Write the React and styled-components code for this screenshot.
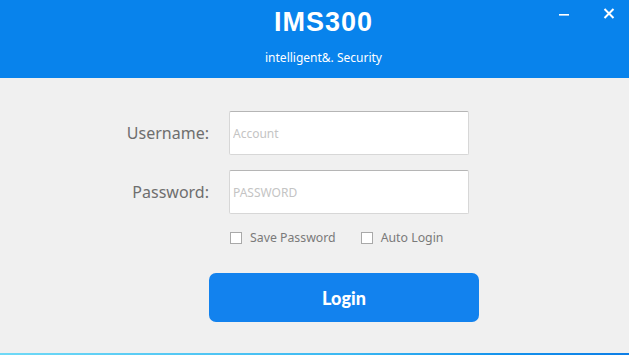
import React, { useState } from "react";
import styled, { createGlobalStyle } from "styled-components";

const GlobalStyle = createGlobalStyle`
  html, body {
    margin: 0;
    padding: 0;
    background: #f0f0f0;
  }
  body {
    font-family: "Noto Sans", "Open Sans", sans-serif;
  }
`;

const Window = styled.div`
  width: 629px;
  height: 355px;
  display: flex;
  flex-direction: column;
  background: #f0f0f0;
  overflow: hidden;
`;

const Header = styled.div`
  position: relative;
  box-sizing: border-box;
  height: 78px;
  padding-left: 18px;
  background-color: #0883ec;
  color: white;
  display: flex;
  flex-direction: column;
  align-items: center;
`;

const Title = styled.h1`
  margin: 6px 0 0;
  font-family: "Liberation Sans", Arial, sans-serif;
  font-size: 27px;
  font-weight: bold;
  letter-spacing: 1px;
  line-height: 32px;
`;

const Subtitle = styled.div`
  margin-top: 12px;
  font-size: 12px;
  line-height: 16px;
`;

const Controls = styled.div`
  position: absolute;
  top: 4px;
  right: 10px;
  display: flex;
  gap: 25px;
`;

const ControlButton = styled.button`
  width: 20px;
  height: 18px;
  padding: 0;
  border: none;
  background: none;
  display: flex;
  align-items: center;
  justify-content: center;
  cursor: pointer;
`;

const Body = styled.div`
  flex: 1;
  display: flex;
  flex-direction: column;
  align-items: flex-start;
  padding-top: 33px;
  padding-left: 109px;
`;

const Row = styled.div`
  display: grid;
  grid-template-columns: 100px 240px;
  column-gap: 20px;
  align-items: center;
  margin-bottom: ${(p) => p.$gap || 15}px;
`;

const Label = styled.label`
  text-align: right;
  font-size: 16px;
  color: #6e6e6e;
`;

const Input = styled.input`
  box-sizing: border-box;
  width: 240px;
  height: 44px;
  border: 1px solid #d7d7d7;
  border-top-color: #b5b5b5;
  border-radius: 2px;
  background: white;
  padding: 0 3px;
  font-family: "Noto Sans", sans-serif;
  font-size: 12px;
  color: #333;
  outline: none;
  &::placeholder {
    color: #c4c4c4;
  }
`;

const Options = styled.div`
  display: flex;
  gap: 25px;
  margin-left: 121px;
  margin-top: -1px;
`;

const Option = styled.label`
  display: flex;
  align-items: center;
  gap: 8px;
  font-size: 12.3px;
  color: #7a7a7a;
  cursor: pointer;
`;

const Box = styled.span`
  box-sizing: border-box;
  width: 12px;
  height: 12px;
  border: 1px solid #a9a9a9;
  background: ${(p) => (p.$checked ? "#0883ec" : "white")};
`;

const LoginButton = styled.button`
  margin-top: 27px;
  margin-left: 100px;
  width: 270px;
  height: 49px;
  border: none;
  border-radius: 7px;
  background-color: #1282ee;
  color: white;
  font-family: "Lato", "Inter", sans-serif;
  font-size: 18px;
  font-weight: 900;
  cursor: pointer;
`;

const Strip = styled.div`
  height: 2px;
  background: linear-gradient(90deg, #6fd9f6 0%, #3bb8f2 55%, #1492ec 80%, #0d7ee6 100%);
`;

function Check({ label, checked, onToggle }) {
  return (
    <Option onClick={onToggle}>
      <Box $checked={checked} />
      {label}
    </Option>
  );
}

export default function App() {
  const [save, setSave] = useState(false);
  const [auto, setAuto] = useState(false);

  return (
    <>
      <GlobalStyle />
      <Window>
        <Header>
          <Title>IMS300</Title>
          <Subtitle>intelligent&amp;. Security</Subtitle>
          <Controls>
            <ControlButton aria-label="minimize">
              <svg width="12" height="12" viewBox="0 0 12 12">
                <rect x="1" y="7" width="10" height="1.6" fill="white" />
              </svg>
            </ControlButton>
            <ControlButton aria-label="close">
              <svg width="12" height="12" viewBox="0 0 12 12">
                <path d="M1.5 2 L10.5 11 M10.5 2 L1.5 11" stroke="white" strokeWidth="2" />
              </svg>
            </ControlButton>
          </Controls>
        </Header>
        <Body>
          <Row>
            <Label>Username:</Label>
            <Input placeholder="Account" />
          </Row>
          <Row $gap={16}>
            <Label>Password:</Label>
            <Input placeholder="PASSWORD" type="text" />
          </Row>
          <Options>
            <Check label="Save Password" checked={save} onToggle={() => setSave(!save)} />
            <Check label="Auto Login" checked={auto} onToggle={() => setAuto(!auto)} />
          </Options>
          <LoginButton>Login</LoginButton>
        </Body>
        <Strip />
      </Window>
    </>
  );
}
